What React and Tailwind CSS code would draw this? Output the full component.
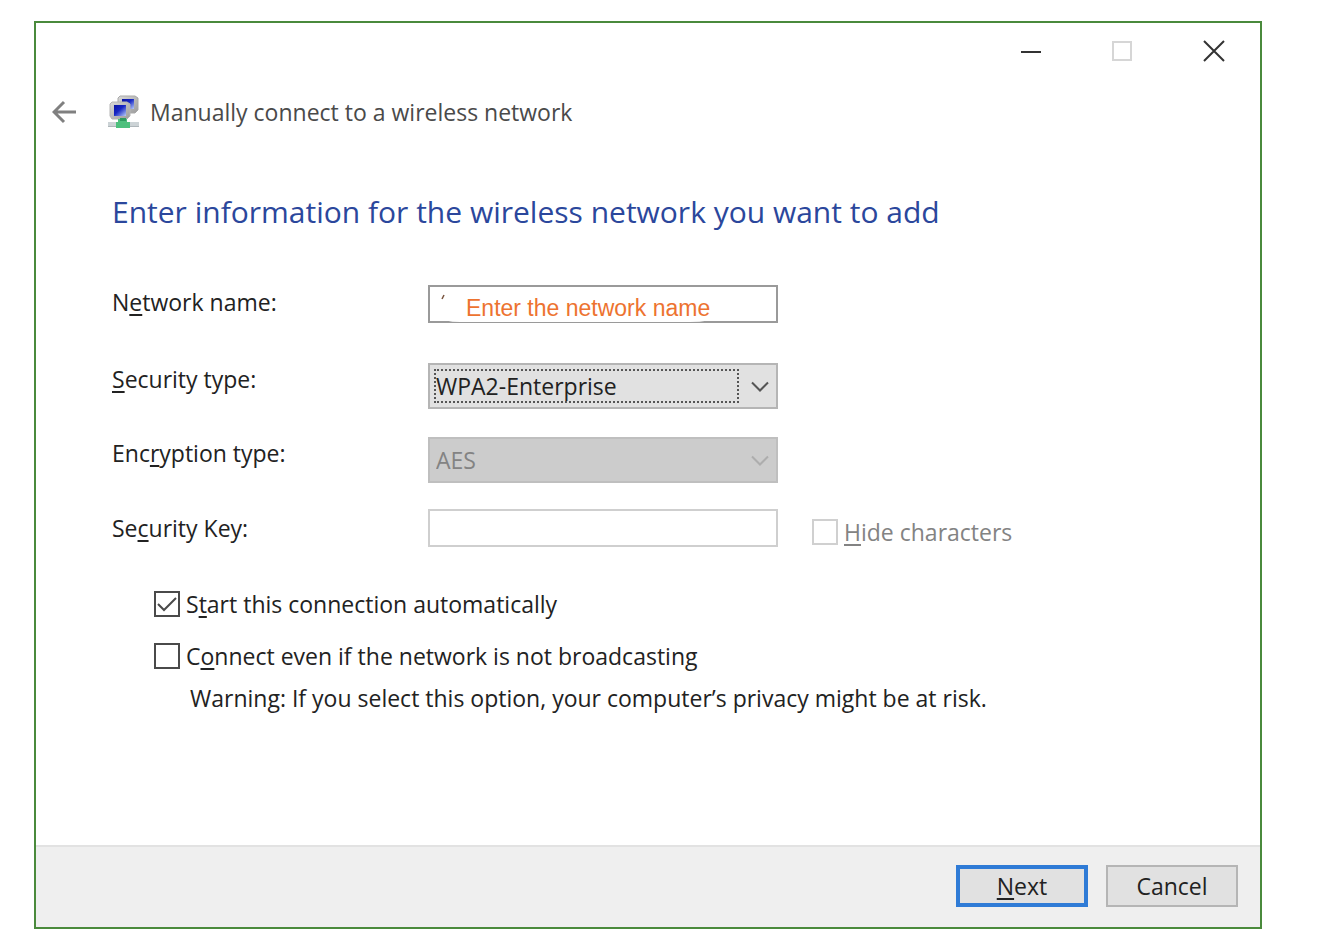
import { useState } from "react";

const WindowButton = ({ label, disabled, children }) => (
  <button
    type="button"
    aria-label={label}
    disabled={disabled}
    className="flex h-14 w-[92px] items-center justify-center text-[#333333] disabled:text-[#d6d6d6]"
  >
    <svg width="22" height="22" viewBox="0 0 22 22" fill="none" stroke="currentColor" strokeWidth="2">
      {children}
    </svg>
  </button>
);

const NetworkIcon = () => (
  <svg width="32" height="34" viewBox="0 0 32 34" aria-hidden="true">
    <defs>
      <linearGradient id="screen" x1="0" y1="0" x2="1" y2="1">
        <stop offset="0" stopColor="#0a12a0" />
        <stop offset="0.45" stopColor="#1626c4" />
        <stop offset="1" stopColor="#b9cdfa" />
      </linearGradient>
      <linearGradient id="bezel" x1="0" y1="0" x2="1" y2="1">
        <stop offset="0" stopColor="#d9d9d9" />
        <stop offset="1" stopColor="#9c9c9c" />
      </linearGradient>
    </defs>
    <path d="M12 1h15l3 2v12l-3 3H12l-2-3V3z" fill="url(#bezel)" stroke="#a9a9a9" />
    <path d="M14 4h12v10H14z" fill="url(#screen)" />
    <path d="M4 7h15l3 2v12l-3 3H4l-2-3V9z" fill="url(#bezel)" stroke="#b4b4b4" />
    <path d="M6 10h12v11H6z" fill="url(#screen)" />
    <path d="M0 27h31v5H0z" fill="#ccd3d6" />
    <path d="M0 31h31v1H0z" fill="#aeb6ba" />
    <path d="M10 24h9v3h3v6H8v-6h2z" fill="#4dc07d" />
    <path d="M12 23h6v3h-6z" fill="#2f9c60" />
  </svg>
);

// underlined keyboard shortcut letter
const Key = ({ children }) => (
  <span className="underline decoration-2 underline-offset-3">{children}</span>
);

const Row = ({ id, label, className, children }) => (
  <div className={`flex items-start ${className}`}>
    <label htmlFor={id} className="w-[316px] shrink-0">
      {label}
    </label>
    {children}
  </div>
);

const Chevron = () => (
  <svg
    width="18"
    height="11"
    viewBox="0 0 18 11"
    fill="none"
    stroke="currentColor"
    strokeWidth="2"
    className="pointer-events-none absolute top-[18px] right-[9px]"
  >
    <path d="M1 1.5l8 8 8-8" />
  </svg>
);

const CheckBox = ({ id, checked, onChange, disabled, children }) => (
  <div className={`flex items-center gap-1.5 leading-[34px] ${disabled ? "text-[#838383]" : ""}`}>
    <span className="relative flex size-[26px] shrink-0">
      <input
        id={id}
        type="checkbox"
        checked={checked}
        onChange={onChange}
        disabled={disabled}
        className="size-[26px] appearance-none border-2 border-[#4a4a4a] bg-white disabled:border-[#d0d0d0]"
      />
      {checked && (
        <svg
          viewBox="0 0 26 26"
          fill="none"
          stroke="#4a4a4a"
          strokeWidth="2"
          className="pointer-events-none absolute inset-0"
        >
          <path d="M4 13l6 6L22 7" />
        </svg>
      )}
    </span>
    <label htmlFor={id}>{children}</label>
  </div>
);

export default function App() {
  const [name, setName] = useState("");
  const [autoStart, setAutoStart] = useState(true);
  const [hidden, setHidden] = useState(false);

  return (
    <div className="flex min-h-screen bg-white py-[21px] pr-[58px] pl-[34px] font-['Open_Sans',sans-serif] text-[23px] leading-[34px] text-[#222222]">
      <form
        onSubmit={(e) => e.preventDefault()}
        className="flex flex-1 flex-col border-2 border-[#4a8a3c] bg-white"
      >
        <div className="flex justify-end">
          <WindowButton label="Minimize">
            <path d="M2 12h20" />
          </WindowButton>
          <WindowButton label="Maximize" disabled>
            <path d="M2 2h18v18H2z" />
          </WindowButton>
          <WindowButton label="Close">
            <path d="M1 1l20 20M21 1L1 21" />
          </WindowButton>
        </div>

        <header className="flex h-[66px] items-center pl-4 text-[#4a4a4a]">
          <button type="button" aria-label="Back" className="mr-8 text-[#808080]">
            <svg width="24" height="24" viewBox="0 0 24 24" fill="none" stroke="currentColor" strokeWidth="3">
              <path d="M24 12H2M12 2L2 12l10 10" />
            </svg>
          </button>
          <NetworkIcon />
          <span className="ml-2.5">Manually connect to a wireless network</span>
        </header>

        <main className="flex-1 pl-[76px]">
          <h1 className="mt-[47px] text-[30px] leading-10 text-[#2b479c]">
            Enter information for the wireless network you want to add
          </h1>

          <Row id="name" className="mt-[53px] leading-[34px]" label={<>N<Key>e</Key>twork name:</>}>
            <div className="relative w-[350px]">
              <input
                id="name"
                type="text"
                value={name}
                onChange={(e) => setName(e.target.value)}
                placeholder="Enter the network name"
                className="block h-[38px] w-full border-2 border-[#9a9a9a] bg-white pt-2 pl-9 font-['Liberation_Sans',sans-serif] text-[23px] leading-7 text-[#ed7330] placeholder:text-[#ed7330] placeholder:opacity-100"
              />
              <svg width="350" height="38" viewBox="0 0 350 38" className="pointer-events-none absolute inset-0">
                <path d="M18 35.500Q24 37 32 37H262Q272 37 280 35.500z" fill="#ffffff" />
                <path d="M16 10l-2 4" stroke="#7a5540" strokeWidth="1.500" />
              </svg>
            </div>
          </Row>

          <Row id="security" className="mt-10 leading-8" label={<><Key>S</Key>ecurity type:</>}>
            <div className="relative w-[350px] text-[#555555]">
              <select
                id="security"
                className="block h-[46px] w-full appearance-none border-2 border-[#b5b5b5] bg-[#e1e1e1] pl-1.5 text-[#222222]"
              >
                <option>WPA2-Enterprise</option>
              </select>
              <span className="pointer-events-none absolute top-1.5 right-[39px] bottom-1.5 left-1.5 border-2 border-dotted border-[#555555]" />
              <Chevron />
            </div>
          </Row>

          <Row id="encryption" className="mt-7 leading-8" label={<>Enc<Key>r</Key>yption type:</>}>
            <div className="relative w-[350px] text-[#adadad]">
              <select
                id="encryption"
                disabled
                className="block h-[46px] w-full appearance-none border-2 border-[#bfbfbf] bg-[#cccccc] pl-1.5 text-[#838383] opacity-100"
              >
                <option>AES</option>
              </select>
              <Chevron />
            </div>
          </Row>

          <Row id="key" className="mt-[26px] leading-[38px]" label={<>Se<Key>c</Key>urity Key:</>}>
            <input
              id="key"
              type="text"
              disabled
              className="h-[38px] w-[350px] border-2 border-[#cfcfcf] bg-white px-2"
            />
            <div className="mt-1.5 ml-[34px]">
              <CheckBox id="hide" disabled checked={false} onChange={() => {}}>
                <Key>H</Key>ide characters
              </CheckBox>
            </div>
          </Row>

          <div className="mt-[38px] flex flex-col gap-[18px] pl-[42px]">
            <CheckBox id="auto" checked={autoStart} onChange={() => setAutoStart(!autoStart)}>
              S<Key>t</Key>art this connection automatically
            </CheckBox>
            <CheckBox id="broadcast" checked={hidden} onChange={() => setHidden(!hidden)}>
              C<Key>o</Key>nnect even if the network is not broadcasting
            </CheckBox>
          </div>
          <p className="mt-2 pl-[78px]">
            Warning: If you select this option, your computer’s privacy might be at risk.
          </p>
        </main>

        <footer className="flex justify-end gap-[18px] border-t-2 border-[#e2e2e2] bg-[#efefef] pt-[18px] pr-[22px] pb-5">
          <button type="submit" className="h-[42px] w-[132px] border-4 border-[#2f7bd6] bg-[#e1e1e1]">
            <Key>N</Key>ext
          </button>
          <button type="button" className="h-[42px] w-[132px] border-2 border-[#b5b5b5] bg-[#e1e1e1]">
            Cancel
          </button>
        </footer>
      </form>
    </div>
  );
}
